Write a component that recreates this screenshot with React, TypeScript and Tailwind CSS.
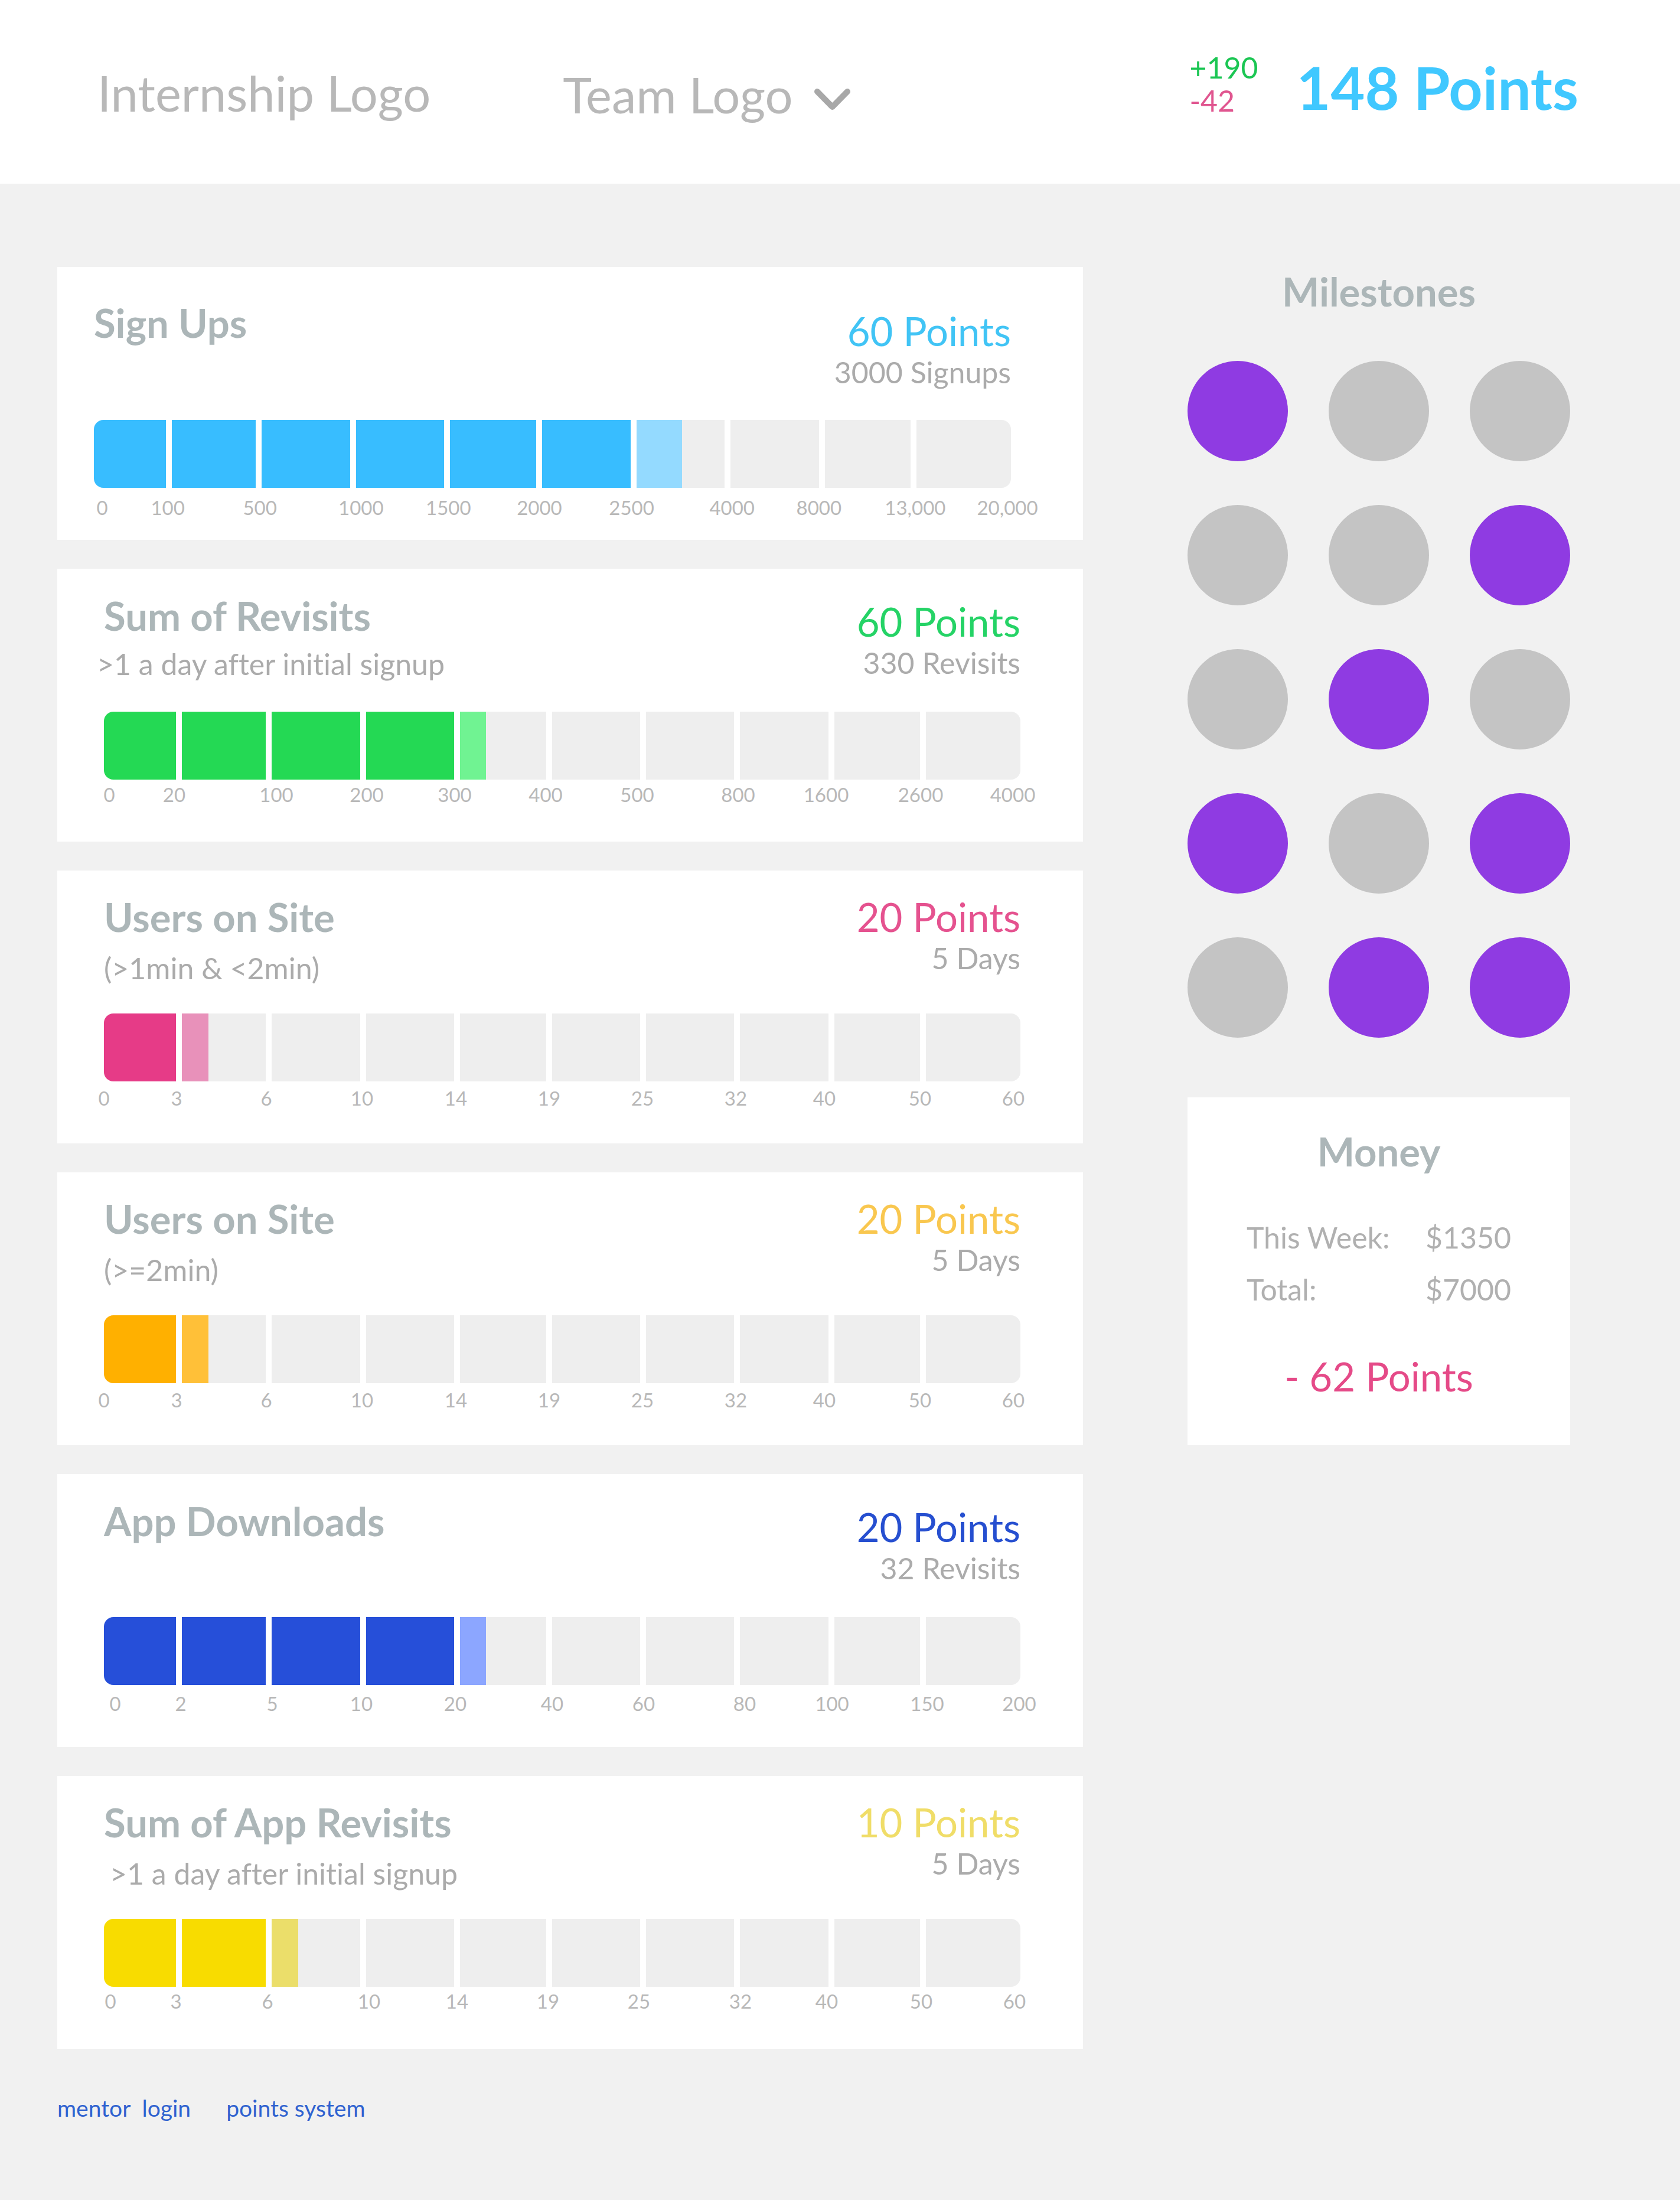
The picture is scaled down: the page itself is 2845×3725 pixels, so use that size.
import React from "react";

type Metric = {
  title: string;
  note?: string;
  points: string;
  detail: string;
  pointsColor: string;
  fill: string;
  partialFill: string;
  complete: number;
  partial: number;
  labels: string[];
  stops: number[];
  inset: string;
  heading: string;
  noteClass?: string;
  score: string;
  axis: string;
};

const BAR_LENGTH = 1552;
const SEGMENTS = [122, 142, 150, 149, 146, 149, 149, 150, 145, 160];
const MINUTES = ["0", "3", "6", "10", "14", "19", "25", "32", "40", "50", "60"];

const metrics: Metric[] = [
  {
    title: "Sign Ups",
    points: "60 Points",
    detail: "3000 Signups",
    pointsColor: "text-[#41c4f5]",
    fill: "bg-[#38bdff]",
    partialFill: "bg-[#94daff]",
    complete: 6,
    partial: 52,
    labels: ["0", "100", "500", "1000", "1500", "2000", "2500", "4000", "8000", "13,000", "20,000"],
    stops: [14, 125, 281, 452, 600, 754, 910, 1080, 1227, 1390, 1546],
    inset: "pl-[62px] pr-[122px]",
    heading: "h-[259px] pt-[54px]",
    score: "pt-[14px]",
    axis: "pt-[13px]",
  },
  {
    title: "Sum of Revisits",
    note: ">1 a day after initial signup",
    points: "60 Points",
    detail: "330 Revisits",
    pointsColor: "text-[#25d366]",
    fill: "bg-[#24d954]",
    partialFill: "bg-[#70f392]",
    complete: 4,
    partial: 30,
    labels: ["0", "20", "100", "200", "300", "400", "500", "800", "1600", "2600", "4000"],
    stops: [9, 119, 292, 445, 594, 748, 903, 1074, 1223, 1383, 1539],
    inset: "pl-[79px] pr-[106px]",
    heading: "h-[242px] pt-[39px]",
    noteClass: "-ml-[12px] pt-[12px]",
    score: "pt-[10px]",
    axis: "pt-[5px]",
  },
  {
    title: "Users on Site",
    note: "(>1min & <2min)",
    points: "20 Points",
    detail: "5 Days",
    pointsColor: "text-[#e5528f]",
    fill: "bg-[#e63b87]",
    partialFill: "bg-[#e891ba]",
    complete: 1,
    partial: 32,
    labels: MINUTES,
    stops: [0, 123, 275, 437, 596, 754, 912, 1070, 1220, 1382, 1540],
    inset: "pl-[79px] pr-[106px]",
    heading: "h-[242px] pt-[38px]",
    noteClass: "pt-[17px]",
    score: "",
    axis: "pt-[8px]",
  },
  {
    title: "Users on Site",
    note: "(>=2min)",
    points: "20 Points",
    detail: "5 Days",
    pointsColor: "text-[#f9c74f]",
    fill: "bg-[#ffb000]",
    partialFill: "bg-[#ffc038]",
    complete: 1,
    partial: 32,
    labels: MINUTES,
    stops: [0, 123, 275, 437, 596, 754, 912, 1070, 1220, 1382, 1540],
    inset: "pl-[79px] pr-[106px]",
    heading: "h-[242px] pt-[38px]",
    noteClass: "pt-[17px]",
    score: "",
    axis: "pt-[8px]",
  },
  {
    title: "App Downloads",
    points: "20 Points",
    detail: "32 Revisits",
    pointsColor: "text-[#264fd0]",
    fill: "bg-[#264fd9]",
    partialFill: "bg-[#8ca6ff]",
    complete: 4,
    partial: 30,
    labels: ["0", "2", "5", "10", "20", "40", "60", "80", "100", "150", "200"],
    stops: [19, 130, 285, 436, 595, 759, 914, 1085, 1233, 1394, 1550],
    inset: "pl-[79px] pr-[106px]",
    heading: "h-[242px] pt-[39px]",
    score: "pt-[10px]",
    axis: "pt-[11px]",
  },
  {
    title: "Sum of App Revisits",
    note: ">1 a day after initial signup",
    points: "10 Points",
    detail: "5 Days",
    pointsColor: "text-[#f0dd68]",
    fill: "bg-[#f8dc00]",
    partialFill: "bg-[#ebde6a]",
    complete: 2,
    partial: 30,
    labels: MINUTES,
    stops: [11, 122, 277, 449, 598, 752, 906, 1078, 1224, 1384, 1542],
    inset: "pl-[79px] pr-[106px]",
    heading: "h-[242px] pt-[38px]",
    noteClass: "pl-[10px] pt-[17px]",
    score: "",
    axis: "pt-[4px]",
  },
];

const milestones = [
  true, false, false,
  false, false, true,
  false, true, false,
  true, false, true,
  false, true, true,
];

function tracks(widths: number[]) {
  return widths.map((w) => `minmax(0, ${w}fr)`).join(" ");
}

function ProgressBar({ metric }: { metric: Metric }) {
  return (
    <div className="grid h-[115px] gap-[10px] overflow-hidden rounded-2xl" style={{ gridTemplateColumns: tracks(SEGMENTS) }}>
      {SEGMENTS.map((_, i) => (
        <div key={i} className={i < metric.complete ? metric.fill : "bg-[#eeeeee]"}>
          {i === metric.complete && (
            <div className={`h-full ${metric.partialFill}`} style={{ width: `${metric.partial}%` }} />
          )}
        </div>
      ))}
    </div>
  );
}

function Axis({ metric }: { metric: Metric }) {
  const widths = metric.stops.map((stop, i) => stop - (i ? metric.stops[i - 1] : 0));
  widths.push(BAR_LENGTH - metric.stops[metric.stops.length - 1]);
  return (
    <div
      className={`grid text-[33px] leading-[40px] text-[#b8b8b8] ${metric.axis}`}
      style={{ gridTemplateColumns: tracks(widths) }}
    >
      <span />
      {metric.labels.map((label) => (
        <span key={label} className="flex w-0 justify-center whitespace-nowrap">
          {label}
        </span>
      ))}
    </div>
  );
}

function MetricCard({ metric }: { metric: Metric }) {
  return (
    <section className={`min-h-[462px] bg-white ${metric.inset}`}>
      <div className={`flex justify-between ${metric.heading}`}>
        <div>
          <h2 className="text-[67px] leading-[80px] font-bold text-[#acb6b8]">{metric.title}</h2>
          {metric.note && (
            <p className={`text-[50px] leading-[60px] text-[#ababab] ${metric.noteClass}`}>{metric.note}</p>
          )}
        </div>
        <div className={`text-right ${metric.score}`}>
          <p className={`text-[67px] leading-[80px] ${metric.pointsColor}`}>{metric.points}</p>
          <p className="text-[50px] leading-[60px] text-[#ababab]">{metric.detail}</p>
        </div>
      </div>
      <ProgressBar metric={metric} />
      <Axis metric={metric} />
    </section>
  );
}

export default function App() {
  return (
    <div className="min-h-screen bg-[#f1f1f1] font-['Lato',sans-serif] [font-variant-ligatures:none]">
      <header className="flex h-[311px] items-start bg-white pr-[172px] pl-[165px]">
        <div className="pt-[107px] text-[83px] leading-[100px] text-[#b8b8b8]">Internship Logo</div>
        <button type="button" className="ml-[224px] flex items-center gap-[36px] pt-[110px] text-[83px] leading-[100px] text-[#b8b8b8]">
          Team Logo
          <svg className="mt-[16px] h-[37px] w-[61px]" viewBox="0 0 61 37" fill="none" stroke="#a8a8a8" strokeWidth="10" strokeLinecap="round" strokeLinejoin="round" aria-hidden="true">
            <path d="M5 5 L30.5 31 L56 5" />
          </svg>
        </button>
        <div className="ml-auto pt-[86px] text-[50px] leading-[56px]">
          <p className="text-[#1bc653]">+190</p>
          <p className="text-[#e0558f]">-42</p>
        </div>
        <h1 className="ml-[65px] pt-[87px] text-[100px] leading-[120px] font-bold text-[#40c8ff]">148 Points</h1>
      </header>

      <div className="flex items-start gap-[177px] pt-[141px] pr-[186px] pl-[97px]">
        <main className="flex min-w-0 flex-1 flex-col gap-[49px]">
          {metrics.map((metric, i) => (
            <MetricCard key={i} metric={metric} />
          ))}
        </main>

        <aside className="w-[648px] shrink-0">
          <h2 className="pt-[1px] text-center text-[67px] leading-[80px] font-bold text-[#acb6b8]">Milestones</h2>
          <div className="grid grid-cols-3 gap-x-[69px] gap-y-[74px] pt-[78px]">
            {milestones.map((reached, i) => (
              <div key={i} className={`aspect-square rounded-full ${reached ? "bg-[#8f3be2]" : "bg-[#c4c4c4]"}`} />
            ))}
          </div>

          <section className="mt-[101px] min-h-[589px] bg-white px-[100px] pt-[51px]">
            <h2 className="text-center text-[67px] leading-[80px] font-bold text-[#acb6b8]">Money</h2>
            <dl className="grid grid-cols-[1fr_auto] gap-y-[28px] pt-[76px] text-[50px] leading-[60px] text-[#b0b0b0]">
              <dt>This Week:</dt>
              <dd>$1350</dd>
              <dt>Total:</dt>
              <dd>$7000</dd>
            </dl>
            <p className="pt-[77px] text-center text-[67px] leading-[80px] text-[#e54a88]">- 62 Points</p>
          </section>
        </aside>
      </div>

      <footer className="flex gap-[60px] pt-[76px] pb-[100px] pl-[97px] text-[39px] leading-[48px] text-[#2f62d0]">
        <a href="#mentor-login" className="whitespace-pre">mentor  login</a>
        <a href="#points-system">points system</a>
      </footer>
    </div>
  );
}
